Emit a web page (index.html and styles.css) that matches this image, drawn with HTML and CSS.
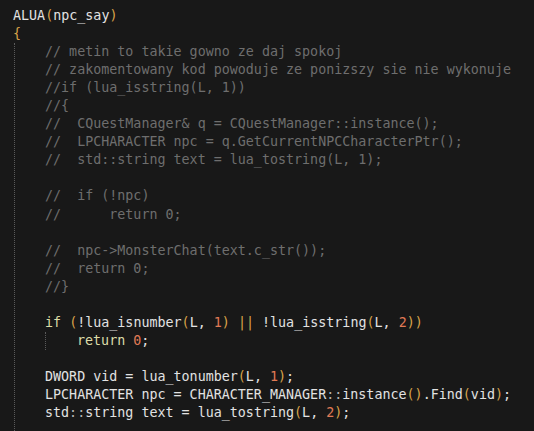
FILE: index.html
```html
<!DOCTYPE html>
<html>
<head>
<meta charset="utf-8">
<link rel="stylesheet" href="styles.css">
</head>
<body>
<div class="code">
<div class="ln">ALUA<span class="p">(</span>npc_say<span class="p">)</span></div>
<div class="ln"><span class="p">{</span></div>
<div class="block">
<div class="ln c">// metin to takie gowno ze daj spokoj</div>
<div class="ln c">// zakomentowany kod powoduje ze ponizszy sie nie wykonuje</div>
<div class="ln c">//if (lua_isstring(L, 1))</div>
<div class="ln c">//{</div>
<div class="ln c">//  CQuestManager&amp; q = CQuestManager::instance();</div>
<div class="ln c">//  LPCHARACTER npc = q.GetCurrentNPCCharacterPtr();</div>
<div class="ln c">//  std::string text = lua_tostring(L, 1);</div>
<div class="ln"></div>
<div class="ln c">//  if (!npc)</div>
<div class="ln c">//      return 0;</div>
<div class="ln"></div>
<div class="ln c">//  npc-&gt;MonsterChat(text.c_str());</div>
<div class="ln c">//  return 0;</div>
<div class="ln c">//}</div>
<div class="ln"></div>
<div class="ln"><span class="k">if</span> <span class="p">(</span>!lua_isnumber<span class="p">(</span>L, <span class="n">1</span><span class="p">)</span> <span class="p">||</span> !lua_isstring<span class="p">(</span>L, <span class="n">2</span><span class="p">)</span><span class="p">)</span></div>
<div class="inner">
<div class="ln"><span class="k">return</span> <span class="n">0</span>;</div>
</div>
<div class="ln"></div>
<div class="ln">DWORD vid = lua_tonumber<span class="p">(</span>L, <span class="n">1</span><span class="p">)</span>;</div>
<div class="ln">LPCHARACTER npc = CHARACTER_MANAGER<span class="g">::</span>instance<span class="p">()</span>.Find<span class="p">(</span>vid<span class="p">)</span>;</div>
<div class="ln">std<span class="g">::</span>string text = lua_tostring<span class="p">(</span>L, <span class="n">2</span><span class="p">)</span>;</div>
</div>
</div>
</body>
</html>
```

FILE: styles.css
```css
html, body {
  margin: 0;
  padding: 0;
  background: #181818;
  overflow: hidden;
  height: 431px;
}
.code {
  box-sizing: border-box;
  height: 431px;
  display: flex;
  flex-direction: column;
  padding: 7px 0 0 13px;
  font-family: "DejaVu Sans Mono", "Liberation Mono", monospace;
  font-size: 13.35px;
  line-height: 18.05px;
  color: #e2e2e2;
}
.ln {
  height: 18.05px;
  white-space: pre;
}
.block {
  flex: 1;
  margin-left: 1px;
  border-left: 1px dotted #5a5a5a;
  padding-left: 30px;
}
.inner {
  border-left: 1px dotted #5a5a5a;
  padding-left: 31px;
}
.c {
  color: #6e6e6e;
}
.p {
  color: #d8a34a;
}
.k {
  color: #dcdca8;
}
.n {
  color: #e07a55;
}
.g {
  color: #b4b4b4;
}
```
